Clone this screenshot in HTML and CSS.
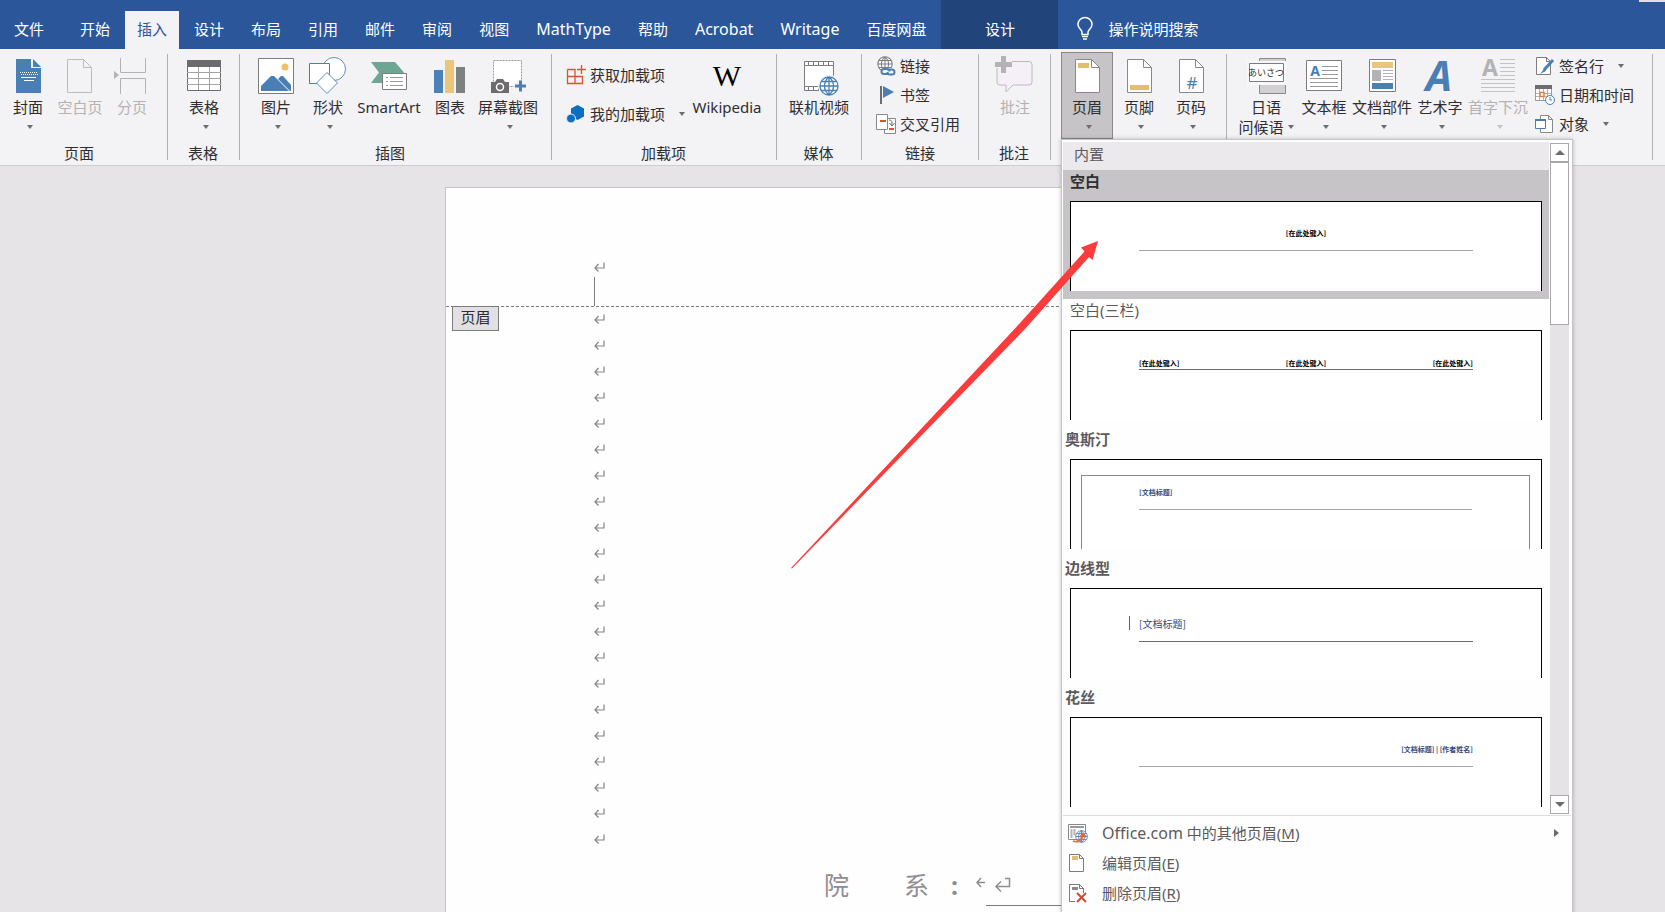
FILE: index.html
```html
<!DOCTYPE html>
<html lang="zh-CN">
<head>
<meta charset="utf-8">
<title>Word</title>
<link rel="stylesheet" href="styles.css">
</head>
<body>
<svg class="defs" aria-hidden="true">
  <symbol id="mark" viewBox="0 0 11 10"><path d="M10 0.500v5.500H1M4.500 2L1 6l3.500 3.500" fill="none" stroke="#858387" stroke-width="1.200"/></symbol>
  <symbol id="page" viewBox="0 0 40 38"><path d="M8.500 2.500h16l8 8v25h-24z" fill="#fff" stroke="#8a888b"/><path d="M24.500 2.500v8h8" fill="none" stroke="#8a888b"/></symbol>
  <symbol id="globe" viewBox="0 0 20 20"><circle cx="10" cy="10" r="9" fill="#fff"/><path d="M10 1a9 9 0 1 0 0 18a9 9 0 0 0 0-18zM10 1c-6 5-6 13 0 18M10 1c6 5 6 13 0 18M10 1v18M1 10h18M2.500 5.500h15M2.500 14.500h15" fill="none" stroke="currentColor" stroke-width="1.300"/></symbol>
</svg>
<div class="app">
  <header class="tabs">
    <span class="sliver"></span>
    <button class="tab file">文件</button>
    <button class="tab">开始</button>
    <button class="tab active">插入</button>
    <button class="tab">设计</button>
    <button class="tab">布局</button>
    <button class="tab">引用</button>
    <button class="tab">邮件</button>
    <button class="tab">审阅</button>
    <button class="tab">视图</button>
    <button class="tab latin">MathType</button>
    <button class="tab">帮助</button>
    <button class="tab latin">Acrobat</button>
    <button class="tab latin">Writage</button>
    <button class="tab">百度网盘</button>
    <button class="tab context">设计</button>
    <button class="tell"><svg width="18" height="22" viewBox="0 0 18 22"><path d="M6 16.500v-2.500c0-2-4-3.500-4-7.500a7 7 0 0 1 14 0c0 4-4 5.500-4 7.500v2.500z" fill="none" stroke="#fff" stroke-width="1.500"/><path d="M6 18.500h6M7 21h4" stroke="#fff" stroke-width="1.500"/></svg>操作说明搜索</button>
  </header>

  <section class="ribbon">
    <div class="group g-pages">
      <div class="tools">
        <button class="big"><svg viewBox="0 0 40 38"><path d="M8 2h15v9h10v25H8z" fill="#4a7fb5"/><path d="M25 2l8 8h-8z" fill="#4a7fb5"/><path d="M12 15.500h17M13 17.500h17" stroke="#fff" stroke-dasharray="1 1"/><path d="M13 20.500h15M16 23.500h10" stroke="#fff"/></svg><span>封面</span><i class="caret"></i></button>
        <button class="big off"><svg viewBox="0 0 40 38"><path d="M7.500 2.500h16l8 8v25h-24zM23.500 2.500v8h8" fill="none" stroke="#bcbabd"/></svg><span>空白页</span></button>
        <button class="big off"><svg viewBox="0 0 40 38"><path d="M8.500 1v14.500h25V1M8.500 37V21.500h25V37" fill="none" stroke="#b4b2b5"/><path d="M2 14l5 4-5 4z" fill="#b4b2b5"/></svg><span>分页</span></button>
      </div>
      <div class="name">页面</div>
    </div>
    <div class="group g-table">
      <div class="tools">
        <button class="big"><svg viewBox="0 0 40 38"><path d="M3.500 3.500h33v30h-33z" fill="#fff" stroke="#6d6b6e"/><path d="M3 3h34v7H3z" fill="#6d6b6e"/><path d="M3 15.500h34M3 21.500h34M3 27.500h34M14.500 10v23M25.500 10v23" stroke="#a5a3a6"/></svg><span>表格</span><i class="caret"></i></button>
      </div>
      <div class="name">表格</div>
    </div>
    <div class="group g-illus">
      <div class="tools">
        <button class="big"><svg viewBox="0 0 40 38"><path d="M2.500 1.500h35v35h-35z" fill="#fff" stroke="#7d7b7e"/><circle cx="29" cy="10" r="3.500" fill="#eebf6d"/><path d="M5 34v-5l10-10h3l15 15z" fill="#4a7fb5"/><path d="M22 22l3-3h2l8 9v6h-1z" fill="#4a7fb5"/></svg><span>图片</span><i class="caret"></i></button>
        <button class="big"><svg viewBox="0 0 40 38"><circle cx="26" cy="12" r="11.500" fill="#fff" stroke="#5b8fc5"/><path d="M1.500 6.500h20v20h-20z" fill="#fff" stroke="#4a7fb5"/><path d="M19 15.500l10.500 10.500L19 36.500 8.500 26z" fill="#fff" stroke="#5b8fc5"/></svg><span>形状</span><i class="caret"></i></button>
        <button class="big wide"><svg viewBox="0 0 40 38"><path d="M2 5h24l9 10.500L26 26H2l8-10.500z" fill="#6ea694"/><path d="M13.500 16.500h24v16h-24z" fill="#fff" stroke="#7d7b7e"/><path d="M17 20.500h2M17 24.500h2M17 28.500h2M21 20.500h13M21 24.500h13M21 28.500h13" stroke="#9a989b"/></svg><span>SmartArt</span></button>
        <button class="big"><svg viewBox="0 0 40 38"><path d="M4 13h9v23H4z" fill="#4c80bb"/><path d="M15 3h9v33h-9z" fill="#eac67c"/><path d="M26 10h9v26h-9z" fill="#7c8182"/></svg><span>图表</span></button>
        <button class="big mid"><svg viewBox="0 0 40 38"><path d="M5.500 3.500h28v26h-28z" fill="#fff" stroke="#9a989b" stroke-dasharray="2 1"/><path d="M3 25h4l2-3h6l2 3h4v11H3z" fill="#6d6b6e"/><circle cx="12" cy="30" r="3.500" fill="none" stroke="#fff" stroke-width="1.500"/><path d="M26 29h12M32 23v12" stroke="#f3f2f4" stroke-width="6"/><path d="M27 29h11M32.500 23.500v11" stroke="#4a7fb5" stroke-width="3"/></svg><span>屏幕截图</span><i class="caret"></i></button>
      </div>
      <div class="name">插图</div>
    </div>
    <div class="group g-addins">
      <div class="tools">
        <div class="rows two">
          <button class="small"><svg viewBox="0 0 20 20"><path d="M1.500 4.500h7.500v14M1.500 11.500h15v7h-15v-14M16.500 11.500" fill="none" stroke="#d2562f" stroke-width="1.300"/><path d="M15.500 0v9M11 4.500h9" stroke="#d2562f" stroke-width="1.300"/></svg>获取加载项</button>
          <button class="small"><svg viewBox="0 0 20 20"><path d="M11.500 1l6.500 3.500v8L11.500 16 5 12.500v-8z" fill="#0c6fc0"/><circle cx="5" cy="14.500" r="4.500" fill="#0c6fc0" stroke="#f3f2f4"/></svg>我的加载项<i class="caret"></i></button>
        </div>
        <button class="big wiki"><b>W</b><span>Wikipedia</span></button>
      </div>
      <div class="name">加载项</div>
    </div>
    <div class="group g-media">
      <div class="tools">
        <button class="big mid"><svg viewBox="0 0 40 38" color="#4a7fb5"><path d="M5.500 4.500h29v29h-29z" fill="#fff" stroke="#7d7b7e"/><path d="M5 8.500h30M5 29.500h30" stroke="#7d7b7e"/><path d="M9 6.500h26M9 31.500h26" stroke="#7d7b7e" stroke-width="3" stroke-dasharray="1 4"/><circle cx="30" cy="29" r="11" fill="#f3f2f4"/><use href="#globe" x="20" y="19" width="20" height="20"/></svg><span>联机视频</span></button>
      </div>
      <div class="name">媒体</div>
    </div>
    <div class="group g-links">
      <div class="tools">
        <div class="rows">
          <button class="small"><svg viewBox="0 0 20 20" color="#7d7b7e"><use href="#globe" x="1" y="0" width="16" height="16"/><path d="M5 12h14v8H5z" fill="#f3f2f4"/><path d="M12 18H8a2.500 2.500 0 0 1 0-5h3a2.500 2.500 0 0 1 2.500 2.500M11 13.500h5a2.500 2.500 0 0 1 0 5h-2a2.500 2.500 0 0 1-2.500-2.500" fill="none" stroke="#4a7fb5" stroke-width="2"/></svg>链接</button>
          <button class="small"><svg viewBox="0 0 20 20"><path d="M5 1v18" stroke="#6d6b6e" stroke-width="2"/><path d="M7 1l11 6-11 6z" fill="#4a7fb5"/></svg>书签</button>
          <button class="small"><svg viewBox="0 0 20 20"><path d="M8.500 4.500h11v15h-11z" fill="#fff" stroke="#8a888b"/><path d="M.5.500h11v15H.500z" fill="#fff" stroke="#8a888b"/><path d="M4 7h6M13 15h5" stroke="#d2562f" stroke-width="2"/><path d="M13 6c3 0 3 2 3 5M13.500 9l2.500 3 2.500-3" fill="none" stroke="#6d6b6e"/></svg>交叉引用</button>
        </div>
      </div>
      <div class="name">链接</div>
    </div>
    <div class="group g-comment">
      <div class="tools">
        <button class="big off"><svg viewBox="0 0 40 38"><path d="M5 4.500h29a3 3 0 0 1 3 3V25a3 3 0 0 1-3 3H18l-7 7v-7H5a3 3 0 0 1-3-3V7.500a3 3 0 0 1 3-3z" fill="#f5f0f7" stroke="#bcbabd"/><path d="M-1 7.500h18M8.500-1v18" stroke="#f3f2f4" stroke-width="7"/><path d="M0 7.500h17M8.500-1v17" stroke="#b4b2b5" stroke-width="5"/></svg><span>批注</span></button>
      </div>
      <div class="name">批注</div>
    </div>
    <div class="group g-header">
      <div class="tools">
        <div class="drop">
          <button class="big pressed" aria-expanded="true"><svg viewBox="0 0 40 38"><use href="#page"/><path d="M11 6h11v5H11z" fill="#e3bd70"/></svg><span>页眉</span><i class="caret"></i></button>
          <div class="menu">
            <div class="gallery">
              <div class="list">
                <div class="cat">内置</div>
                <button class="item sel"><span class="title">空白</span><span class="thumb"><span class="line center l-a">[在此处键入]</span></span></button>
                <button class="item"><span class="title">空白(三栏)</span><span class="thumb"><span class="line spread l-b"><span>[在此处键入]</span><span>[在此处键入]</span><span>[在此处键入]</span></span></span></button>
                <button class="item edge"><span class="title">奥斯汀</span><span class="thumb framed"><span class="frame"><span class="line navy l-c">[文档标题]</span></span></span></button>
                <button class="item edge"><span class="title">边线型</span><span class="thumb"><span class="line side navy l-d"><i class="bar"></i>[文档标题]</span></span></button>
                <button class="item edge"><span class="title">花丝</span><span class="thumb"><span class="line end navy l-a">[文档标题] | [作者姓名]</span></span></button>
              </div>
              <div class="scroll">
                <button class="arrow" aria-label="向上"><i class="tri up"></i></button>
                <div class="grip"></div>
                <button class="arrow down" aria-label="向下"><i class="tri"></i></button>
              </div>
            </div>
            <div class="actions">
              <button class="act"><svg viewBox="0 0 20 20" color="#4a7fb5"><path d="M.5 1.500h17v15H.500z" fill="#fff" stroke="#8a888b"/><path d="M2 4h14" stroke="#9a989b" stroke-width="2"/><path d="M3.500 6v9M6.500 6v6" stroke="#b4b2b5" stroke-width="2"/><use href="#globe" x="7" y="7" width="13" height="13"/><path d="M5 18c5 2 9-1 10-6M12 14l3-3 3 3" fill="none" stroke="#dd6a43" stroke-width="1.800"/></svg><span><span class="latin">Office.com</span> 中的其他页眉(<u>M</u>)</span><i class="sub"></i></button>
              <button class="act"><svg viewBox="0 0 20 20"><path d="M1.500 1.500h10l4 4v13h-14zM11.500 1.500v4h4" fill="#fff" stroke="#7d7b7e"/><path d="M4 3h6v4H4z" fill="#e3bd70"/></svg><span>编辑页眉(<u>E</u>)</span></button>
              <button class="act"><svg viewBox="0 0 20 20"><path d="M7 18.500H1.500v-17h10l4 4V10M11.500 1.500v4h4" fill="none" stroke="#7d7b7e"/><path d="M4 4h6v3H4z" fill="#8a888b"/><path d="M9 10l9 9M18 10l-9 9" stroke="#d04a35" stroke-width="2"/></svg><span>删除页眉(<u>R</u>)</span></button>
            </div>
          </div>
        </div>
        <button class="big"><svg viewBox="0 0 40 38"><use href="#page"/><path d="M11 28h19v5H11z" fill="#e3bd70"/></svg><span>页脚</span><i class="caret"></i></button>
        <button class="big"><svg viewBox="0 0 40 38"><use href="#page"/><text x="21" y="32" class="hash">#</text></svg><span>页码</span><i class="caret"></i></button>
      </div>
    </div>
    <div class="group g-text">
      <div class="tools">
        <button class="big mid"><svg viewBox="0 0 40 38"><path d="M13.500 1.500h26v35h-26z" fill="#d2d0d3" stroke="#8a888b"/><path d="M1 4h39v24H1z" fill="#f8f7f9"/><path d="M3.500 6.500h34v18h-34z" fill="#fff" stroke="#7d7b7e"/><text x="20" y="19" class="kana">あいさつ</text></svg><span>日语</span><span class="pair">问候语<i class="caret"></i></span></button>
        <button class="big"><svg viewBox="0 0 40 38"><path d="M2.500 3.500h35v30h-35z" fill="#fff" stroke="#7d7b7e"/><text x="11" y="19" class="letter">A</text><path d="M18 9.500h16M18 13.500h16M18 17.500h16M6 21.500h28M6 25.500h28M6 29.500h28" stroke="#9a989b"/></svg><span>文本框</span><i class="caret"></i></button>
        <button class="big mid"><svg viewBox="0 0 40 38"><path d="M7.500 2.500h26v32h-26z" fill="#fff" stroke="#7d7b7e"/><path d="M10 5h21v6H10z" fill="#eac67c"/><path d="M10 13h9v11h-9z" fill="#b4b2b5"/><path d="M21 13.500h10M21 16.500h10M21 19.500h10M21 22.500h10" stroke="#b4b2b5"/><path d="M10 26h21v6H10z" fill="#4a7fb5"/></svg><span>文档部件</span><i class="caret"></i></button>
        <button class="big"><svg viewBox="0 0 40 38"><text x="19" y="34" class="art">A</text></svg><span>艺术字</span><i class="caret"></i></button>
        <button class="big mid off"><svg viewBox="0 0 40 38"><text x="12" y="19" class="cap">A</text><path d="M22 2.500h15M22 6.500h15M22 10.500h15M22 14.500h15M22 18.500h15M3 22.500h34M3 26.500h34M3 30.500h34M3 34.500h34" stroke="#c4c2c5"/></svg><span>首字下沉</span><i class="caret"></i></button>
        <div class="rows tight">
          <button class="small"><svg viewBox="0 0 20 20"><path d="M1.500 1.500h10l4 4v13h-14zM11.500 1.500v4h4" fill="#fff" stroke="#7d7b7e"/><path d="M18 4L9 14" stroke="#4a7fb5" stroke-width="3"/><path d="M9 13l-4 5 6-3z" fill="#4a7fb5"/></svg>签名行<i class="caret"></i></button>
          <button class="small"><svg viewBox="0 0 20 20"><path d="M.5 1.500h16v14H.500z" fill="#fff" stroke="#9a989b"/><path d="M0 0h17v4H0z" fill="#6d6b6e"/><path d="M4.500 4v11M8.500 4v11M12.500 4v11M1 8.500h15M1 11.500h15" stroke="#b4b2b5"/><path d="M5 7.500h4v4H5z" fill="#fff" stroke="#e08040" stroke-width="1.500"/><circle cx="15" cy="15" r="4.500" fill="#fff" stroke="#4a7fb5"/><path d="M15 12v3h2" fill="none" stroke="#4a7fb5"/></svg>日期和时间</button>
          <button class="small"><svg viewBox="0 0 20 20"><path d="M5.500 1.500h8l4 4v13h-12zM13.500 1.500v4h4" fill="#fff" stroke="#8a888b"/><path d="M.5 5.500h10v9H.500z" fill="#fff" stroke="#4a7fb5"/><path d="M0 6h11" stroke="#4a7fb5" stroke-width="2"/></svg>对象<i class="caret"></i></button>
        </div>
      </div>
    </div>
  </section>

  <main class="canvas">
    <article class="sheet">
      <div class="head">
        <svg class="mk"><use href="#mark"/></svg>
        <i class="cursor"></i>
      </div>
      <div class="body">
        <span class="tag">页眉</span>
        <div class="marks">
          <svg class="mk"><use href="#mark"/></svg><svg class="mk"><use href="#mark"/></svg><svg class="mk"><use href="#mark"/></svg><svg class="mk"><use href="#mark"/></svg><svg class="mk"><use href="#mark"/></svg><svg class="mk"><use href="#mark"/></svg><svg class="mk"><use href="#mark"/></svg>
          <svg class="mk"><use href="#mark"/></svg><svg class="mk"><use href="#mark"/></svg><svg class="mk"><use href="#mark"/></svg><svg class="mk"><use href="#mark"/></svg><svg class="mk"><use href="#mark"/></svg><svg class="mk"><use href="#mark"/></svg><svg class="mk"><use href="#mark"/></svg>
          <svg class="mk"><use href="#mark"/></svg><svg class="mk"><use href="#mark"/></svg><svg class="mk"><use href="#mark"/></svg><svg class="mk"><use href="#mark"/></svg><svg class="mk"><use href="#mark"/></svg><svg class="mk"><use href="#mark"/></svg><svg class="mk"><use href="#mark"/></svg>
        </div>
        <div class="dept"><span>院</span><span>系</span><span class="colon">:</span>
          <svg width="10" height="18" viewBox="0 0 10 18"><path d="M9 6.500H1M5 2L1 6.500 5 11" fill="none" stroke="#8f8d91" stroke-width="1.500"/></svg>
          <span class="blank"><svg width="16" height="16" viewBox="0 0 16 16"><path d="M10 1.500h4.500v8H1M6 4.500l-5 5 5 5" fill="none" stroke="#8f8d91" stroke-width="1.500"/></svg></span>
        </div>
      </div>
    </article>
  </main>
  <svg class="pointer" width="308" height="328" viewBox="0 0 308 328"><path d="M307 0l-17 6.500 3.500 4L229 82 0 327l1 .5L234 88l64-72 3.500 3z" fill="#fa3c3c"/></svg>
</div>
</body>
</html>
```
FILE: styles.css
```css
* { box-sizing: border-box; }
body { margin: 0; font: 15px/20px "Noto Sans", "Noto Sans CJK SC", sans-serif; color: #2f2d30; }
button { margin: 0; padding: 0; border: 0; background: none; font: inherit; color: inherit; }
svg { overflow: visible; }
.defs { position: absolute; width: 0; height: 0; }
.app { position: relative; height: 100vh; overflow: hidden; display: flex; flex-direction: column; background: #e6e4e7; }

.tabs { position: relative; display: flex; align-items: flex-end; gap: 3px; height: 49px; flex: none; background: #2b579a; color: #fff; }
.sliver { position: absolute; right: 0; top: 0; width: 26px; height: 2px; background: #e6dde4; }
.tab { height: 38px; padding: 0 12px 3px; white-space: nowrap; }
.latin { font-size: 16px; }
.tab.file { padding: 0 21px 3px 14px; }
.tab.active { background: #f3f2f4; color: #2b579a; }
.tab.context { height: 49px; width: 117px; padding-top: 11px; background: #21457b; }
.tell { display: flex; align-items: center; gap: 14px; height: 38px; padding: 0 0 3px 15px; }

.ribbon { display: flex; flex: none; height: 117px; background: #f3f2f4; border-bottom: 1px solid #cfcdd0; }
.group { position: relative; display: flex; flex-direction: column; justify-content: space-between; flex: none; padding: 3px 0 2px; }
.group::after { content: ""; position: absolute; right: 0; top: 5px; bottom: 5px; width: 1px; background: #b3b1b4; }
.tools { display: flex; height: 87px; }
.name { text-align: center; }
.g-pages { width: 168px; padding-left: 2px; }
.g-pages .name { padding-right: 12px; }
.g-table { width: 72px; padding-left: 10px; }
.g-table .name { padding-right: 12px; }
.g-illus { width: 312px; padding-left: 10px; }
.g-illus .name { padding-right: 22px; }
.g-addins { width: 225px; padding-left: 14px; }
.g-addins .name { padding-right: 16px; }
.g-media { width: 85px; padding-left: 10px; }
.g-media .name { padding-right: 12px; }
.g-links { width: 117px; padding-left: 14px; }
.g-links .name { padding-right: 15px; }
.g-comment { width: 72px; padding-left: 10px; }
.g-comment .name { padding-right: 12px; }
.g-header { width: 176px; padding-left: 10px; }
.g-text { width: 426px; padding-left: 7px; }

.big { display: flex; flex-direction: column; align-items: center; width: 52px; height: 87px; padding-top: 5px; white-space: nowrap; }
.big svg { width: 40px; height: 38px; margin-bottom: 2px; flex: none; }
.big.mid { width: 64px; }
.big.wide { width: 70px; }
.big.wiki { width: 80px; }
.wiki b { height: 38px; margin-bottom: 2px; font: 30px/38px "Liberation Serif", serif; color: #000; }
.big.off { color: #b4b2b5; }
.big.pressed { background: #c6c4c7; border: 1px solid #8a888b; padding-top: 4px; }
.caret { width: 0; height: 0; margin: 8px 0 0 4px; border: 3px solid transparent; border-top: 4px solid #6d6b6e; border-bottom: 0; }
.off .caret { border-top-color: #c4c2c5; }
.pair { display: flex; align-items: center; gap: 4px; }
.pair .caret { margin: 0; }
.hash { font: 17px "Noto Sans", sans-serif; fill: #4a7fb5; text-anchor: middle; }
.kana { font: 9px "Noto Sans CJK JP", sans-serif; fill: #2f2d30; text-anchor: middle; }
.letter { font: bold 14px "Noto Sans", sans-serif; fill: #4a7fb5; text-anchor: middle; }
.art { font: italic bold 42px/30px "Open Sans", sans-serif; fill: #4a7fb5; text-anchor: middle; }
.cap { font: bold 23px "Noto Sans", sans-serif; fill: #b4b2b5; text-anchor: middle; }

.rows { display: flex; flex-direction: column; }
.rows.two { width: 121px; padding-top: 4px; }
.rows.tight { padding-left: 5px; }
.small { display: flex; align-items: center; gap: 4px; height: 29px; padding-bottom: 1px; white-space: nowrap; }
.two .small { height: 39px; }
.small svg { width: 20px; height: 20px; flex: none; }
.small .caret { margin: 0 0 0 10px; }

.drop { position: relative; }
.menu { position: absolute; z-index: 2; left: 0; top: 87px; width: 512px; height: 800px; padding: 2px 1px 0; background: #fefefe; border: 1px solid #c6c4c7; box-shadow: 0 0 4px #00000040; color: #5c5a5d; }
.gallery { display: flex; border-bottom: 1px solid #dedcdf; }
.list { flex: 1; }
.cat { height: 28px; padding: 2px 11px; background: #ebe9ec; }
.item { display: flex; flex-direction: column; width: 100%; height: 129px; padding: 0 7px 8px; text-align: left; }
.item.sel { background: #c6c4c7; color: #2f2d30; }
.title { height: 31px; padding-top: 1px; }
.sel .title, .edge .title { font-weight: bold; }
.edge .title { margin-left: -5px; }
.thumb { display: flex; flex-direction: column; height: 90px; width: 100%; padding: 0 68px; background: #fff; border: 1px solid #000; border-bottom: 0; }
.line { display: flex; align-items: flex-end; height: 49px; border-bottom: 1px solid #a5a3a6; font: bold 7px/10px "Noto Sans CJK SC", sans-serif; color: #000; }
.center { justify-content: center; }
.spread { justify-content: space-between; border-color: #6d6b6e; }
.end { justify-content: flex-end; }
.navy { color: #2f4a7d; }
.l-a { padding-bottom: 12px; }
.l-b { height: 39px; padding-bottom: 1px; }
.framed { padding: 15px 11px 0 10px; }
.frame { flex: 1; padding: 0 57px; border: 1px solid #8a888b; border-bottom: 0; }
.l-c { height: 34px; padding-bottom: 12px; }
.l-d { height: 53px; padding-bottom: 11px; font: 10px/12px "Noto Sans CJK SC", sans-serif; border-color: #6d6b6e; }
.bar { width: 1px; height: 14px; margin: 0 9px 0 -10px; background: #3c66b0; }
.scroll { display: flex; flex-direction: column; width: 19px; margin: 1px 2px 1px 1px; background: #e5e3e6; }
.arrow { display: grid; place-items: center; height: 19px; background: #fff; border: 1px solid #aaa8ab; }
.arrow.down { margin-top: auto; }
.grip { height: 163px; background: #fff; border: 1px solid #aaa8ab; }
.tri { border: 5px solid transparent; border-top-color: #6d6b6e; border-bottom: 0; }
.tri.up { border: 5px solid transparent; border-bottom-color: #6d6b6e; border-top: 0; }
.actions { padding-top: 2px; }
.act { display: flex; align-items: center; gap: 14px; width: 100%; height: 30px; padding: 0 12px 0 5px; }
.act svg { width: 20px; height: 20px; }
.act u { text-underline-offset: 2px; }
.sub { margin-left: auto; border: 4px solid transparent; border-left: 5px solid #6d6b6e; border-right: 0; }

.canvas { flex: 1; display: flex; justify-content: center; padding-top: 21px; }
.sheet { width: 775px; background: #fefefe; border: 1px solid #c6c4c7; }
.head { display: flex; flex-direction: column; align-items: flex-start; height: 119px; padding: 74px 0 0 148px; background: repeating-linear-gradient(90deg, #7d7b7e 0 3px, transparent 3px 5px) bottom / 100% 1px no-repeat; }
.mk { display: block; width: 11px; height: 10px; }
.head .mk { margin-bottom: 5px; }
.cursor { width: 1px; height: 29px; background: #7d7b7e; }
.body { position: relative; }
.tag { position: absolute; left: 6px; top: -1px; width: 47px; padding: 0 0 3px; text-align: center; background: #e2e0e3; border: 1px solid #7d7b7e; }
.marks { display: flex; flex-direction: column; gap: 16px; padding: 7px 0 0 148px; }
.dept { display: flex; align-items: center; height: 60px; margin-top: 11px; padding-left: 378px; font-size: 25px; color: #8f8d91; }
.dept span { margin-right: 55px; }
.dept .colon { margin: 0 18px 0 -33px; font-weight: bold; }
.dept .blank { display: flex; flex: 1; align-items: center; height: 42px; margin: 0; padding-left: 9px; border-bottom: 1px solid #7d7b7e; }

.pointer { position: absolute; z-index: 3; left: 791px; top: 241px; }
```
